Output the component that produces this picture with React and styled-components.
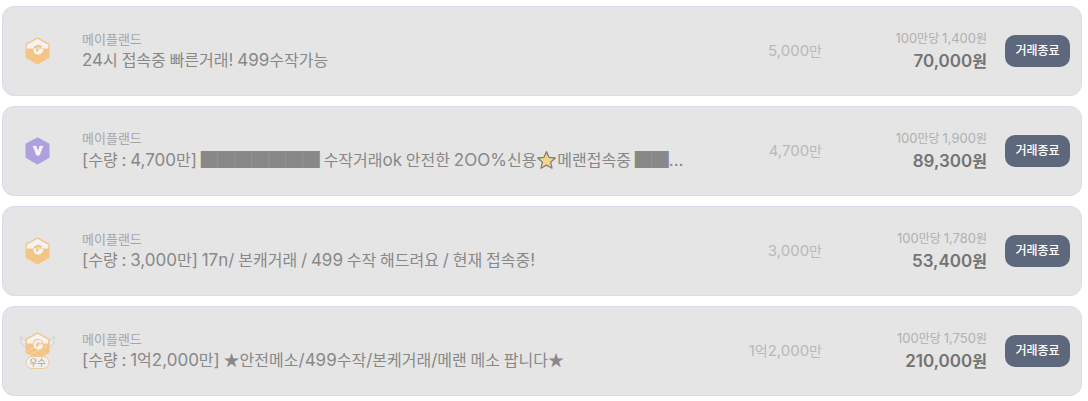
import React from "react";
import styled, { createGlobalStyle } from "styled-components";

const GlobalStyle = createGlobalStyle`
  * { box-sizing: border-box; }
  body {
    margin: 0;
    background: #fff;
    font-family: Inter, "Noto Sans CJK KR", sans-serif;
  }
`;

const List = styled.ul`
  list-style: none;
  margin: 0;
  padding: 6px 6px 5px 2px;
  display: flex;
  flex-direction: column;
  gap: 10px;
`;

const Row = styled.li`
  display: flex;
  align-items: center;
  min-height: 90px;
  padding: 0 11px 0 17px;
  border: 1px solid #d6dceb;
  border-radius: 12px;
  background: #e5e5e5;
`;

const Badge = styled.div`
  flex: none;
  width: 36px;
  height: 40px;
  margin-right: 26px;
  svg { display: block; }
`;

const Info = styled.div`
  flex: 1;
  min-width: 0;
`;

const Game = styled.div`
  font-size: 14px;
  line-height: 18px;
  color: #a5a5a5;
`;

const Title = styled.div`
  font-size: 17px;
  line-height: ${(p) => (p.$tall ? 26 : 24)}px;
  color: #888;
  white-space: nowrap;
  overflow-x: clip;
  overflow-y: visible;
  text-overflow: ellipsis;
`;

const Amount = styled.div`
  flex: none;
  width: 120px;
  text-align: right;
  font-size: 15px;
  line-height: 20px;
  color: #b9b9b9;
`;

const Prices = styled.div`
  flex: none;
  width: 165px;
  text-align: right;
`;

const UnitPrice = styled.div`
  font-size: 13px;
  line-height: 20px;
  color: #b0b0b0;
`;

const Price = styled.div`
  font-size: 17px;
  font-weight: 600;
  line-height: 26px;
  color: #737373;
`;

const DoneButton = styled.button`
  flex: none;
  width: 65px;
  height: 32px;
  margin-left: 18px;
  padding: 0 0 2px;
  border: 0;
  border-radius: 10px;
  background: #5d687c;
  color: #fff;
  font-family: inherit;
  font-size: 13px;
  font-weight: 500;
  line-height: 20px;
`;

const Hangul = styled.span`
  font-family: "Noto Sans CJK KR", sans-serif;
  font-size: ${(p) => p.$size}px;
  line-height: 1;
`;

const Symbol = styled.span`
  font-family: "Noto Sans CJK KR", sans-serif;
  line-height: 1;
`;

const StarIcon = styled.svg`
  width: 19px;
  height: 18px;
  margin: 0 1px;
  vertical-align: -3px;
`;

function Star() {
  return (
    <StarIcon viewBox="0 0 19 18" role="img" aria-label="별">
      <path
        d="M9.5 .8 12 6.3 18.300 7 13.600 11.200 15 17.200 9.500 14.100 4 17.200 5.400 11.200 .7 7 7 6.300Z"
        fill="#f5d58a"
        stroke="#7f7f7c"
        strokeWidth="1.300"
        strokeLinejoin="round"
      />
    </StarIcon>
  );
}

// Hangul and stars are set one pixel smaller than the Latin text beside them.
function Mixed({ text, hangul }) {
  return text
    .split(/([가-힣★]+|[█ ]+|⭐)/)
    .filter(Boolean)
    .map((part, i) => {
      if (part === "⭐") return <Star key={i} />;
      if (/[가-힣★]/.test(part)) return <Hangul key={i} $size={hangul}>{part}</Hangul>;
      if (/[█ ]/.test(part)) return <Symbol key={i}>{part}</Symbol>;
      return part;
    });
}

const HEX = "M17.500 6.200 29.500 12.800V26.800L17.500 33.500 5.500 26.800V12.800Z";
const ROOF = "M17.500 7.800 28.200 13.700V17.500H6.800V13.700Z";
const G_MARK = "M21.200 16.600A3.600 3.600 0 1 0 21.700 19.600H18.200";

function GoldBadge() {
  return (
    <svg width="36" height="40" viewBox="0 0 36 40" role="img" aria-label="골드">
      <defs>
        <clipPath id="gold-lower">
          <rect x="0" y="17.500" width="36" height="20" />
        </clipPath>
      </defs>
      <path d={HEX} fill="#f4c587" />
      <path d={ROOF} fill="#f3f3f3" />
      <path d={G_MARK} fill="none" stroke="#f4c587" strokeWidth="2.600" />
      <path d={G_MARK} fill="none" stroke="#f7f5f2" strokeWidth="2.600" clipPath="url(#gold-lower)" />
    </svg>
  );
}

function VipBadge() {
  return (
    <svg width="36" height="40" viewBox="0 0 36 40" role="img" aria-label="VIP">
      <path d={HEX} fill="#ae9fde" />
      <path d="M13 15H16.200L18 20.600 19.800 15H23L19.500 24.200H16.500Z" fill="#f7f5fb" stroke="#f7f5fb" strokeWidth=".4" strokeLinejoin="round" />
    </svg>
  );
}

function BestBadge() {
  return (
    <svg width="36" height="40" viewBox="0 0 36 40" role="img" aria-label="우수">
      <g fill="#ececec" stroke="#c6c6c6" strokeWidth=".8">
        <path d="M6 9.500Q2 8.500 1.200 5.500 0 8 1.500 11 .5 12 3 14L6 16Z" />
        <path d="M29 9.500Q33 8.500 33.800 5.500 35 8 33.500 11 34.500 12 32 14L29 16Z" />
      </g>
      <g transform="translate(0 -5)">
        <path d={HEX} fill="#f4c587" />
        <path d={ROOF} fill="#f3f3f3" />
        <path d="M7 25.500 14 21M9 29 27 20" stroke="#f8d9b0" strokeWidth="1" />
        <path d="M12.500 17.600A5.600 5.600 0 0 1 23.500 17.600Z" fill="#f4c587" />
        <path d={G_MARK} fill="none" stroke="#f7f5f2" strokeWidth="2.300" />
      </g>
      <rect x="6" y="25.500" width="23" height="12" rx="6" fill="#f2f0ed" stroke="#eccb9c" />
      <text x="17.500" y="35" textAnchor="middle" fontFamily="Noto Sans CJK KR" fontSize="9" fill="#b99a74">우수</text>
    </svg>
  );
}

const badges = { gold: GoldBadge, vip: VipBadge, best: BestBadge };

const items = [
  { badge: "gold", title: "24시 접속중 빠른거래! 499수작가능", amount: "5,000만", unit: "1,400", price: "70,000" },
  { badge: "vip", tall: true, title: "[수량 : 4,700만] ███████ 수작거래ok 안전한 2OO%신용⭐메랜접속중 ██...", amount: "4,700만", unit: "1,900", price: "89,300" },
  { badge: "gold", title: "[수량 : 3,000만] 17n/ 본캐거래 / 499 수작 해드려요 / 현재 접속중!", amount: "3,000만", unit: "1,780", price: "53,400" },
  { badge: "best", title: "[수량 : 1억2,000만] ★안전메소/499수작/본케거래/메랜 메소 팝니다★", amount: "1억2,000만", unit: "1,750", price: "210,000" },
];

export default function App() {
  return (
    <>
      <GlobalStyle />
      <List>
        {items.map((item) => {
          const Icon = badges[item.badge];
          return (
            <Row key={item.title}>
              <Badge><Icon /></Badge>
              <Info>
                <Game><Mixed text="메이플랜드" hangul={13} /></Game>
                <Title $tall={item.tall}><Mixed text={item.title} hangul={16} /></Title>
              </Info>
              <Amount><Mixed text={item.amount} hangul={14} /></Amount>
              <Prices>
                <UnitPrice><Mixed text={`100만당 ${item.unit}원`} hangul={12} /></UnitPrice>
                <Price><Mixed text={`${item.price}원`} hangul={16} /></Price>
              </Prices>
              <DoneButton type="button"><Mixed text="거래종료" hangul={12} /></DoneButton>
            </Row>
          );
        })}
      </List>
    </>
  );
}
